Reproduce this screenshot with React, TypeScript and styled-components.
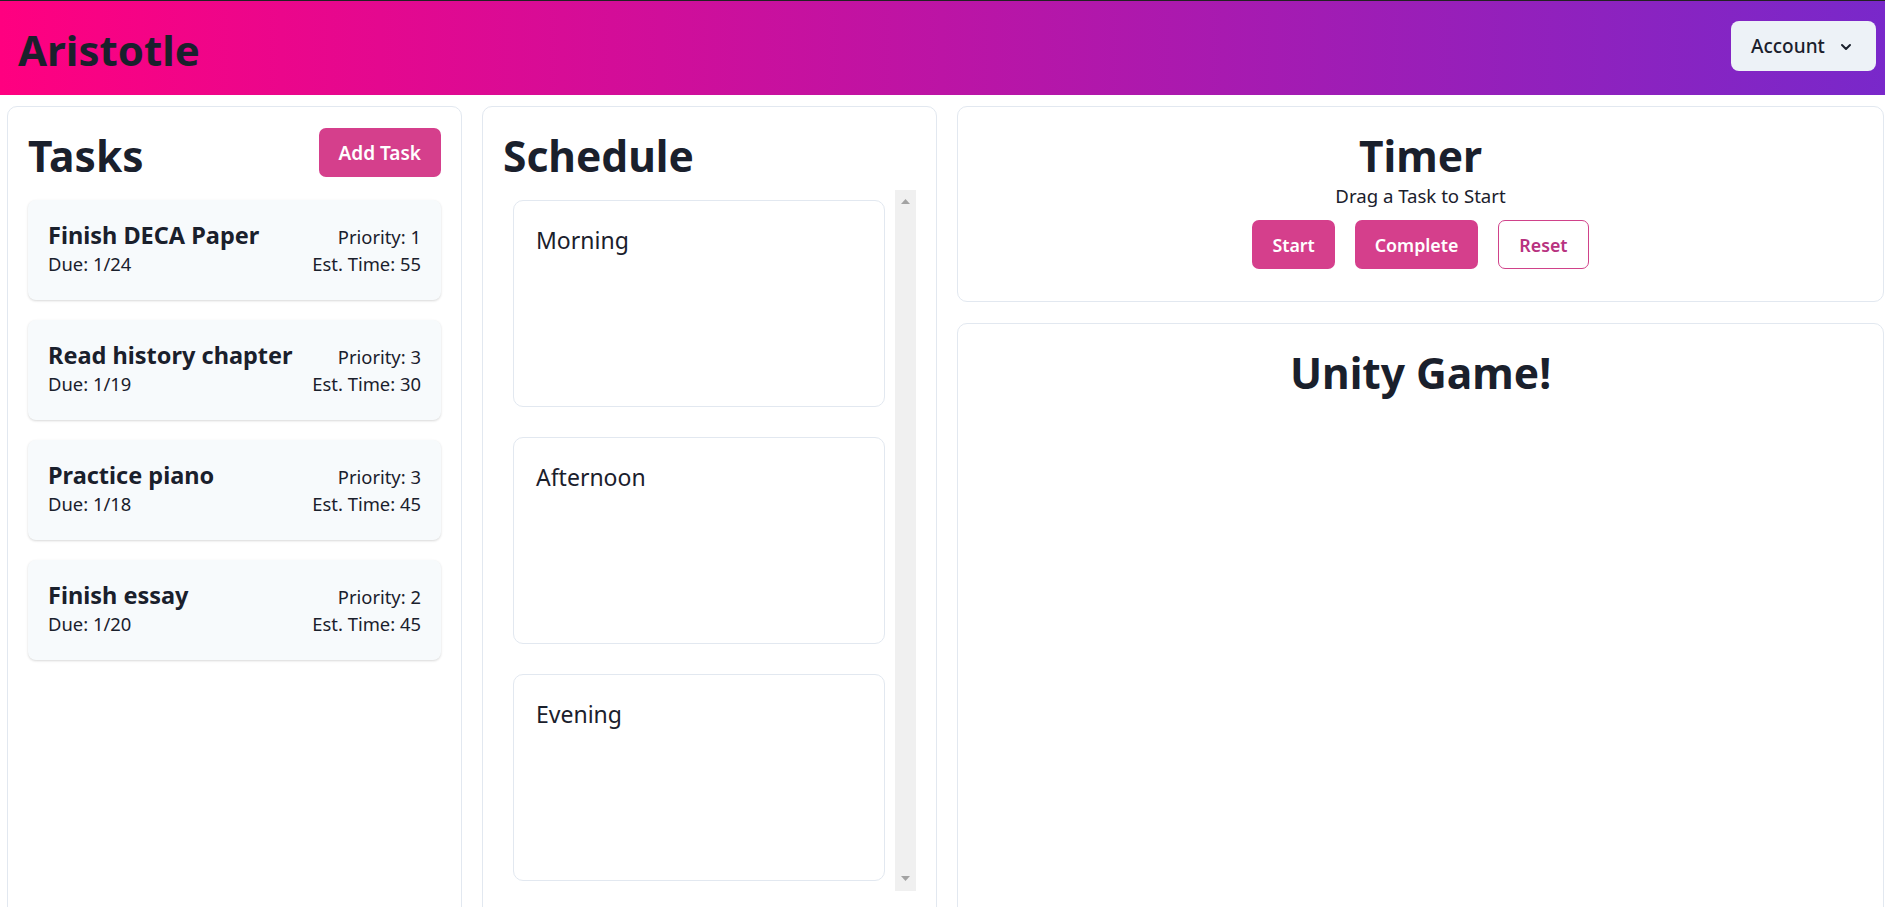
import React from "react";
import styled, { createGlobalStyle } from "styled-components";

const GlobalStyle = createGlobalStyle`
  html, body {
    margin: 0;
    padding: 0;
    overflow: hidden;
    background: #ffffff;
  }
  body {
    font-family: "Noto Sans", "Open Sans", sans-serif;
    color: #1a202c;
  }
  * {
    box-sizing: border-box;
  }
`;

const tasks = [
  { title: "Finish DECA Paper", priority: 1, due: "1/24", est: 55 },
  { title: "Read history chapter", priority: 3, due: "1/19", est: 30 },
  { title: "Practice piano", priority: 3, due: "1/18", est: 45 },
  { title: "Finish essay", priority: 2, due: "1/20", est: 45 },
];

const slots = ["Morning", "Afternoon", "Evening"];

const App = () => {
  return (
    <Page>
      <GlobalStyle />
      <TopBar>
        <Brand>Aristotle</Brand>
        <AccountButton>
          Account
          <svg width="12" height="8" viewBox="0 0 12 8">
            <path d="M2 2 L6 6 L10 2" fill="none" stroke="#1a202c" strokeWidth="2" strokeLinecap="round" strokeLinejoin="round" />
          </svg>
        </AccountButton>
      </TopBar>

      <Board>
        <Panel $tall>
          <PanelHeader>
            <Title>Tasks</Title>
            <PinkButton $big>Add Task</PinkButton>
          </PanelHeader>
          <TaskList>
            {tasks.map((t) => (
              <TaskCard key={t.title}>
                <TaskRow>
                  <TaskName>{t.title}</TaskName>
                  <TaskMeta>Priority: {t.priority}</TaskMeta>
                </TaskRow>
                <TaskRow $second>
                  <TaskMeta>Due: {t.due}</TaskMeta>
                  <TaskMeta>Est. Time: {t.est}</TaskMeta>
                </TaskRow>
              </TaskCard>
            ))}
          </TaskList>
        </Panel>

        <Panel $tall>
          <Title>Schedule</Title>
          <ScheduleFrame>
            <SlotList>
              {slots.map((s) => (
                <SlotCard key={s}>
                  <SlotLabel>{s}</SlotLabel>
                </SlotCard>
              ))}
            </SlotList>
            <ScrollGutter>
              <svg width="9" height="5" viewBox="0 0 9 5">
                <polygon points="0,5 4.5,0 9,5" fill="#a3a3a3" />
              </svg>
              <svg width="9" height="5" viewBox="0 0 9 5">
                <polygon points="0,0 9,0 4.5,5" fill="#a3a3a3" />
              </svg>
            </ScrollGutter>
          </ScheduleFrame>
        </Panel>

        <TimerPanel>
          <Title>Timer</Title>
          <Hint>Drag a Task to Start</Hint>
          <ButtonRow>
            <PinkButton>Start</PinkButton>
            <PinkButton>Complete</PinkButton>
            <OutlineButton>Reset</OutlineButton>
          </ButtonRow>
        </TimerPanel>

        <GamePanel>
          <Title>Unity Game!</Title>
        </GamePanel>
      </Board>
    </Page>
  );
};

const Page = styled.div`
  width: 100%;
  height: 100vh;
  overflow: hidden;
`;

const TopBar = styled.header`
  height: 95px;
  border-top: 1px solid #222222;
  background: linear-gradient(to right, #ff0080, #7928ca);
  display: flex;
  align-items: center;
  justify-content: space-between;
  padding: 0 9px 0 18px;
`;

const Brand = styled.h1`
  margin: 4px 0 0 0;
  font-size: 42px;
  font-weight: 700;
  color: #1a202c;
  line-height: 1.2;
`;

const AccountButton = styled.button`
  display: flex;
  align-items: center;
  gap: 15px;
  height: 50px;
  width: 145px;
  padding: 0 20px;
  margin-bottom: 4px;
  border: none;
  border-radius: 8px;
  background: #edf2f7;
  color: #1a202c;
  font-family: inherit;
  font-size: 19px;
  font-weight: 500;

  svg {
    margin-top: 2px;
  }
`;

const Board = styled.main`
  display: grid;
  grid-template-columns: 455px 455px 1fr;
  grid-template-rows: 196px 700px;
  column-gap: 20px;
  row-gap: 21px;
  padding: 11px 1px 0 7px;
`;

const Panel = styled.section<{ $tall?: boolean }>`
  grid-row: ${(p) => (p.$tall ? "1 / span 2" : "auto")};
  border: 1px solid #e2e8f0;
  border-radius: 10px;
  background: #ffffff;
  padding: 20px;
  display: flex;
  flex-direction: column;
`;

const TimerPanel = styled(Panel)`
  align-items: center;
`;

const GamePanel = styled(Panel)`
  align-items: center;
`;

const PanelHeader = styled.div`
  display: flex;
  justify-content: space-between;
  align-items: flex-start;
`;

const Title = styled.h2`
  margin: 0;
  font-size: 42.5px;
  line-height: 57px;
  font-weight: 700;
  color: #1a202c;
`;

const PinkButton = styled.button<{ $big?: boolean }>`
  height: 49px;
  padding: 0 20px;
  margin-top: 1px;
  border: none;
  border-radius: 7px;
  background: #d53f8c;
  color: #ffffff;
  font-family: inherit;
  font-size: ${(p) => (p.$big ? "19px" : "17.8px")};
  font-weight: 600;
`;

const OutlineButton = styled(PinkButton)`
  background: #ffffff;
  border: 1px solid #d0428a;
  color: #b83280;
`;

const TaskList = styled.div`
  display: flex;
  flex-direction: column;
  gap: 20px;
  margin-top: 16px;
`;

const TaskCard = styled.div`
  background: #f7fafc;
  border-radius: 8px;
  box-shadow: 0 1px 3px rgba(0, 0, 0, 0.1), 0 1px 2px rgba(0, 0, 0, 0.06);
  padding: 21px 20px 20px 20px;
  height: 100px;
`;

const TaskRow = styled.div<{ $second?: boolean }>`
  display: flex;
  justify-content: space-between;
  align-items: baseline;
  margin-top: ${(p) => (p.$second ? "1px" : "0")};
`;

const TaskName = styled.h3`
  margin: 0;
  font-size: 23.5px;
  line-height: 28px;
  font-weight: 700;
  color: #1a202c;
`;

const TaskMeta = styled.span`
  font-size: 18.4px;
  line-height: 26px;
  color: #1a202c;
`;

const ScheduleFrame = styled.div`
  margin-top: 6px;
  height: 701px;
  display: flex;
`;

const SlotList = styled.div`
  flex: 1;
  padding: 10px;
  display: flex;
  flex-direction: column;
  gap: 30px;
`;

const ScrollGutter = styled.div`
  width: 21px;
  background: #f0f0f0;
  display: flex;
  flex-direction: column;
  align-items: center;
  justify-content: space-between;
  padding: 9px 0 10px;
`;

const SlotCard = styled.div`
  flex: 0 0 207px;
  border: 1px solid #e2e8f0;
  border-radius: 10px;
  padding: 21px 22px;
`;

const SlotLabel = styled.p`
  margin: 0;
  font-size: 23px;
  line-height: 36px;
  color: #1a202c;
`;

const Hint = styled.p`
  margin: -2px 0 0 0;
  font-size: 18.6px;
  line-height: 27px;
  color: #1a202c;
`;

const ButtonRow = styled.div`
  display: flex;
  gap: 20px;
  margin-top: 10px;
`;

export default App;
